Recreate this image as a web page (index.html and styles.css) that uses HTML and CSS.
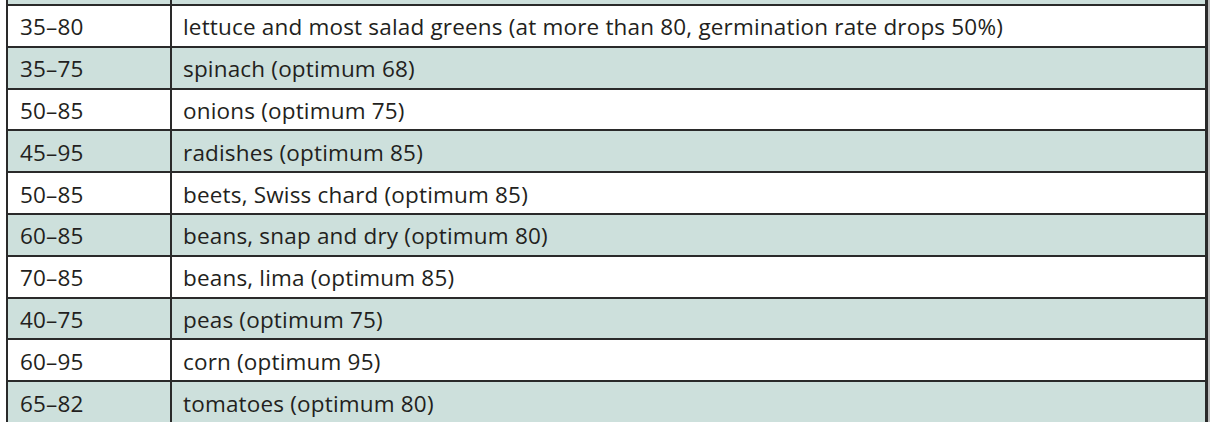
FILE: index.html
```html
<!DOCTYPE html>
<html>
<head>
<meta charset="utf-8">
<link rel="stylesheet" href="styles.css">
</head>
<body>
<div class="table">
  <div class="row shaded top"><div class="c1"></div><div class="c2"></div></div>
  <div class="row"><div class="c1">35–80</div><div class="c2">lettuce and most salad greens (at more than 80, germination rate drops 50%)</div></div>
  <div class="row shaded"><div class="c1">35–75</div><div class="c2">spinach (optimum 68)</div></div>
  <div class="row"><div class="c1">50–85</div><div class="c2">onions (optimum 75)</div></div>
  <div class="row shaded"><div class="c1">45–95</div><div class="c2">radishes (optimum 85)</div></div>
  <div class="row"><div class="c1">50–85</div><div class="c2">beets, Swiss chard (optimum 85)</div></div>
  <div class="row shaded"><div class="c1">60–85</div><div class="c2">beans, snap and dry (optimum 80)</div></div>
  <div class="row"><div class="c1">70–85</div><div class="c2">beans, lima (optimum 85)</div></div>
  <div class="row shaded"><div class="c1">40–75</div><div class="c2">peas (optimum 75)</div></div>
  <div class="row"><div class="c1">60–95</div><div class="c2">corn (optimum 95)</div></div>
  <div class="row shaded"><div class="c1">65–82</div><div class="c2">tomatoes (optimum 80)</div></div>
</div>
</body>
</html>
```
FILE: styles.css
```css
html, body {
  margin: 0;
  padding: 0;
  background: #ffffff;
  overflow: hidden;
}
body {
  font-family: "Open Sans", "Noto Sans", sans-serif;
  font-size: 22.5px;
  letter-spacing: 0.18px;
  color: #231f20;
}
.table {
  margin-left: 6px;
  width: 1197px;
  border-left: 2px solid #2a2a2a;
  border-right: 3px solid #2a2a2a;
  box-shadow: 2px 0 0 #bdbdbd;
}
.row {
  display: grid;
  grid-template-columns: 164px 1fr;
  height: 41.8px;
  box-sizing: border-box;
  border-top: 2px solid #2a2a2a;
  background: #ffffff;
}
.row.shaded {
  background: #cde0dc;
}
.row.top {
  height: 4px;
  border-top: none;
}
.c1 {
  border-right: 2px solid #2a2a2a;
  padding-left: 12px;
  padding-top: 2px;
  display: flex;
  align-items: center;
}
.c2 {
  padding-left: 11px;
  padding-top: 2px;
  display: flex;
  align-items: center;
}
```
